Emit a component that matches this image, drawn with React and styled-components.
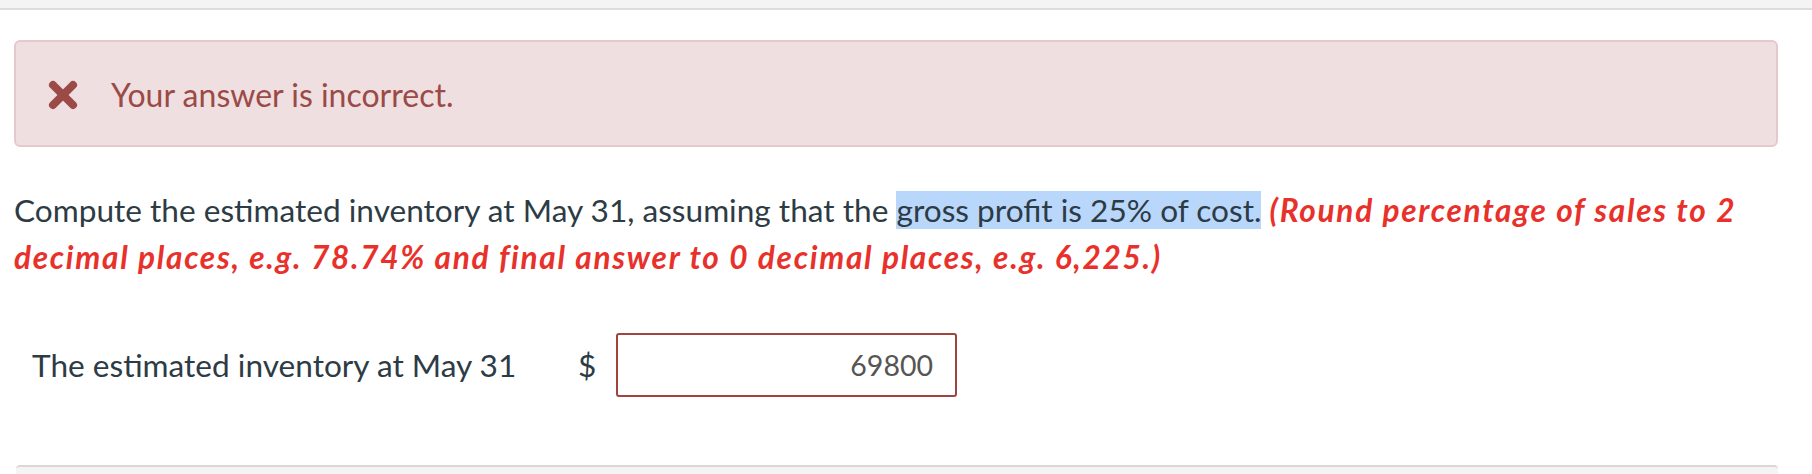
import React from "react";
import styled, { createGlobalStyle } from "styled-components";

const Global = createGlobalStyle`
  html, body { margin: 0; padding: 0; background: #fff; }
  body { font-family: Lato, "Open Sans", sans-serif; color: #2d3b45; }
  * { box-sizing: border-box; }
`;

const TopBar = styled.div`
  height: 10px;
  background: #f4f4f4;
  border-bottom: 2px solid #dddddd;
`;

const Page = styled.div`
  padding: 0 34px 0 14px;
`;

const Alert = styled.div`
  margin-top: 30px;
  height: 107px;
  background: #efdfe0;
  border: 2px solid #e6c9cd;
  border-radius: 6px;
  display: flex;
  align-items: center;
  padding: 2px 0 0 32px;
  gap: 33px;
  color: #9b4a47;
  font-size: 32px;
`;

const Question = styled.p`
  margin: 40px 0 0;
  font-size: 31.6px;
  line-height: 47px;
  color: #2d3b45;
`;

const Selected = styled.span`
  background: #b9d6fb;
`;

const Hint = styled.span`
  color: #e8312b;
  font-style: italic;
  font-weight: 700;
  letter-spacing: 1.7px;
`;

const AnswerRow = styled.div`
  margin-top: 52px;
  display: flex;
  align-items: center;
  padding-left: 18px;
  font-size: 31.6px;
`;

const Label = styled.span`
  width: 546px;
  color: #2d3b45;
`;

const Currency = styled.span`
  width: 38px;
  color: #2d3b45;
`;

const Input = styled.div`
  width: 341px;
  height: 64px;
  border: 2px solid #a0443f;
  border-radius: 3px;
  display: flex;
  align-items: center;
  justify-content: flex-end;
  padding-right: 22px;
  font-size: 28.5px;
  color: #555555;
`;

const NextCard = styled.div`
  margin: 68px 0 0 2px;
  height: 20px;
  background: #f4f4f4;
  border-top: 2px solid #d8d8d8;
  border-radius: 4px 4px 0 0;
`;

const XIcon = () => (
  <svg width="30" height="30" viewBox="0 0 30 30">
    <g stroke="#9b4a47" strokeWidth="8" strokeLinecap="round">
      <line x1="5" y1="5" x2="25" y2="25" />
      <line x1="25" y1="5" x2="5" y2="25" />
    </g>
  </svg>
);

export default function App() {
  return (
    <>
      <Global />
      <TopBar />
      <Page>
        <Alert>
          <XIcon />
          <span>Your answer is incorrect.</span>
        </Alert>
        <Question>
          Compute the estimated inventory at May 31, assuming that the{" "}
          <Selected>gross profit is 25% of cost.</Selected>{" "}
          <Hint>
            (Round percentage of sales to 2 decimal places, e.g. 78.74% and final answer to 0 decimal places, e.g. 6,225.)
          </Hint>
        </Question>
        <AnswerRow>
          <Label>The estimated inventory at May 31</Label>
          <Currency>$</Currency>
          <Input>69800</Input>
        </AnswerRow>
        <NextCard />
      </Page>
    </>
  );
}
